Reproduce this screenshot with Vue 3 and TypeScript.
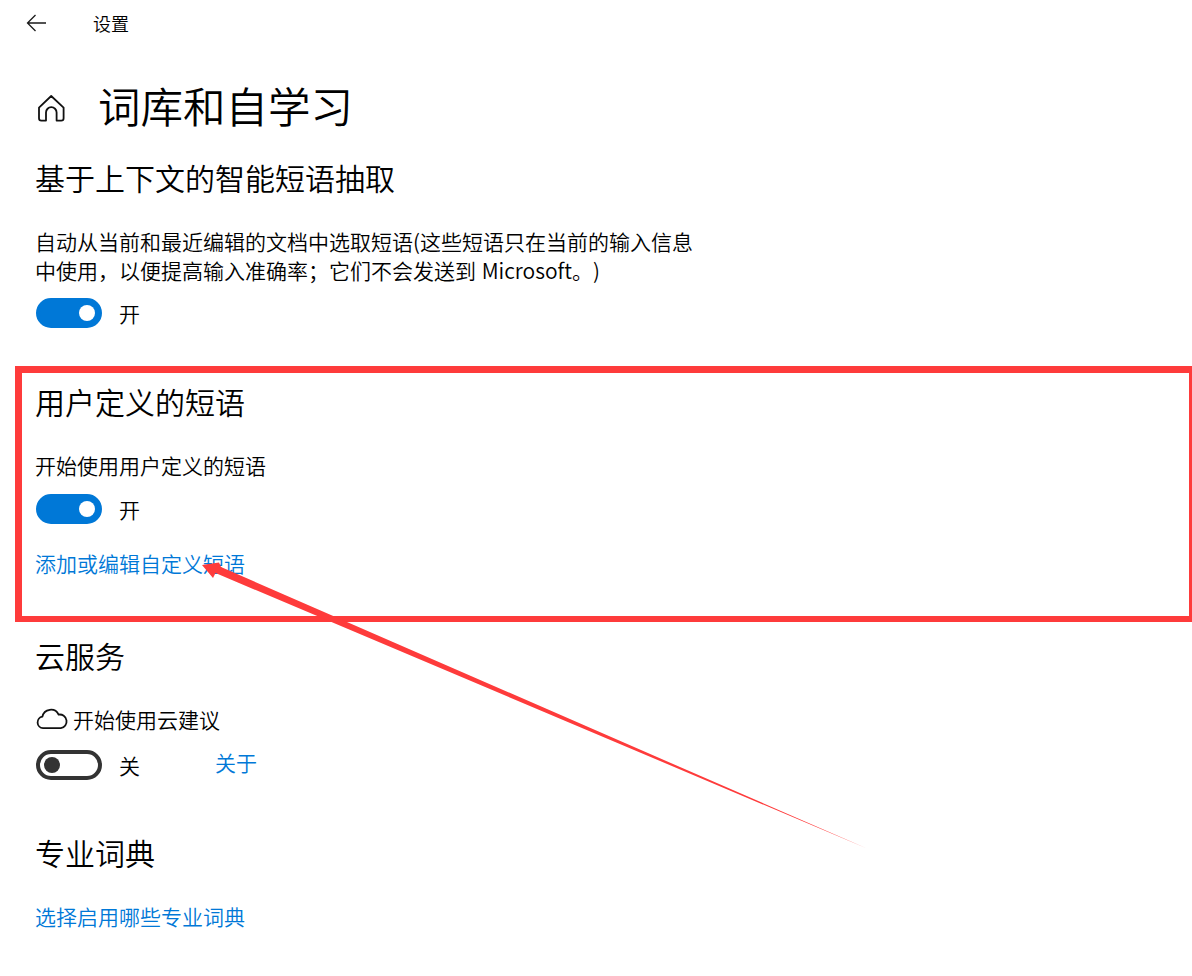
<script setup lang="ts">
interface Sw { on: boolean }
const onState: Sw = { on: true }
const offState: Sw = { on: false }
</script>

<template>
  <div class="page">
    <header class="topbar">
      <svg class="back" width="22" height="18" viewBox="0 0 22 18" fill="none" stroke="#1a1a1a" stroke-width="1.3">
        <path d="M1.5 9H20M9.5 1L1.5 9l8 8" />
      </svg>
      <span class="app">设置</span>
    </header>

    <div class="title-row">
      <svg class="home" width="30" height="30" viewBox="0 0 30 30" fill="none" stroke="#111" stroke-width="1.8" stroke-linejoin="round">
        <path d="M15.2 3L27.6 14.6V25.2a2.4 2.4 0 0 1-2.4 2.4H20.6V19.5a5.3 5.3 0 0 0-10.6 0V27.6H5.4A2.4 2.4 0 0 1 3 25.2V14.6Z" />
      </svg>
      <h1>词库和自学习</h1>
    </div>

    <section class="s1">
      <h2>基于上下文的智能短语抽取</h2>
      <p class="desc">自动从当前和最近编辑的文档中选取短语(这些短语只在当前的输入信息<br />中使用，以便提高输入准确率；它们不会发送到 Microsoft。)</p>
      <div class="toggle-row">
        <span class="toggle" :class="{ on: onState.on }"><i></i></span>
        <span class="state">开</span>
      </div>
    </section>

    <section class="s2">
      <h2>用户定义的短语</h2>
      <p class="label">开始使用用户定义的短语</p>
      <div class="toggle-row">
        <span class="toggle" :class="{ on: onState.on }"><i></i></span>
        <span class="state">开</span>
      </div>
      <a class="link edit">添加或编辑自定义短语</a>
    </section>

    <section class="s3">
      <h2>云服务</h2>
      <div class="cloud-row">
        <svg width="32" height="22" viewBox="0 0 32 22" fill="none" stroke="#111" stroke-width="1.8" stroke-linejoin="round">
          <path d="M7 20.2a5.8 5.8 0 0 1-.6-11.5A8.6 8.6 0 0 1 22.6 6.6a6.8 6.8 0 0 1 2.2 13.6Z" />
        </svg>
        <span>开始使用云建议</span>
      </div>
      <div class="toggle-row off-row">
        <span class="toggle" :class="{ on: offState.on }"><i></i></span>
        <span class="state">关</span>
        <a class="link about">关于</a>
      </div>
    </section>

    <section class="s4">
      <h2>专业词典</h2>
      <a class="link dict">选择启用哪些专业词典</a>
    </section>

    <div class="highlight"></div>
    <svg class="arrow" width="1192" height="976" viewBox="0 0 1192 976">
      <polygon fill="#fe3b3b" points="867,848.5 221,567 219,562.5 202,565 213,578 215.5,573" />
    </svg>
  </div>
</template>

<style>
html, body { background: #fff; }
</style>

<style scoped>
.page {
  position: relative;
  width: 1192px;
  height: 976px;
  overflow: hidden;
  background: #fff;
  color: #000;
  font-family: "Noto Sans CJK SC", "Liberation Sans", sans-serif;
  font-size: 21px;
  font-weight: 350;
  text-spacing-trim: space-all;
}
.topbar { display: flex; align-items: center; height: 48px; padding-left: 26px; }
.back { display: block; margin-top: -2px; }
.app { margin-left: 45px; font-size: 18px; line-height: 24px; position: relative; top: -1px; }
.title-row { display: flex; align-items: center; margin-top: 27px; padding-left: 36px; height: 60px; }
.home { display: block; margin-top: 6px; }
h1 { margin: 0 0 0 32px; font-size: 42.5px; line-height: 60px; font-weight: 350; }
h2 { margin: 0 0 0 -1px; font-size: 30px; line-height: 42px; font-weight: 350; }
section { padding-left: 36px; }
.s1 { margin-top: 21px; }
.desc { margin: 29px 0 0 -1px; font-size: 21px; line-height: 29px; word-spacing: 1px; }
.toggle-row { display: flex; align-items: center; height: 30px; }
.s1 .toggle-row { margin-top: 13px; }
.toggle {
  display: flex;
  align-items: center;
  box-sizing: border-box;
  width: 66px;
  height: 30px;
  border-radius: 15px;
  border: 4px solid #333;
  padding: 0 4px;
}
.toggle i { display: block; width: 16px; height: 16px; border-radius: 50%; background: #333; }
.toggle.on { background: #0078d7; border-color: #0078d7; justify-content: flex-end; padding-right: 3px; }
.toggle.on i { background: #fff; }
.state { margin-left: 17px; font-size: 21px; line-height: 30px; position: relative; top: 0; }
.s2 { margin-top: 52px; }
.label { margin: 28px 0 0 -1px; line-height: 30px; }
.s2 .toggle-row { margin-top: 14px; }
.link { display: block; color: #0078d7; font-size: 21px; line-height: 30px; margin-left: -1px; }
.edit { margin-top: 24px; }
.s3 { margin-top: 56px; }
.cloud-row { display: flex; align-items: center; gap: 5px; margin-top: 28px; height: 30px; }
.off-row { margin-top: 16px; }
.about { margin-left: 75px; position: relative; top: -3px; }
.s4 { margin-top: 51px; }
.dict { margin-top: 28px; }
.highlight {
  position: absolute;
  left: 15px;
  top: 366px;
  width: 1177px;
  height: 256px;
  box-sizing: border-box;
  border-style: solid;
  border-color: #fe3b3b;
  border-width: 7px 3px 6px 7px;
}
.arrow { position: absolute; left: 0; top: 0; pointer-events: none; }
</style>
